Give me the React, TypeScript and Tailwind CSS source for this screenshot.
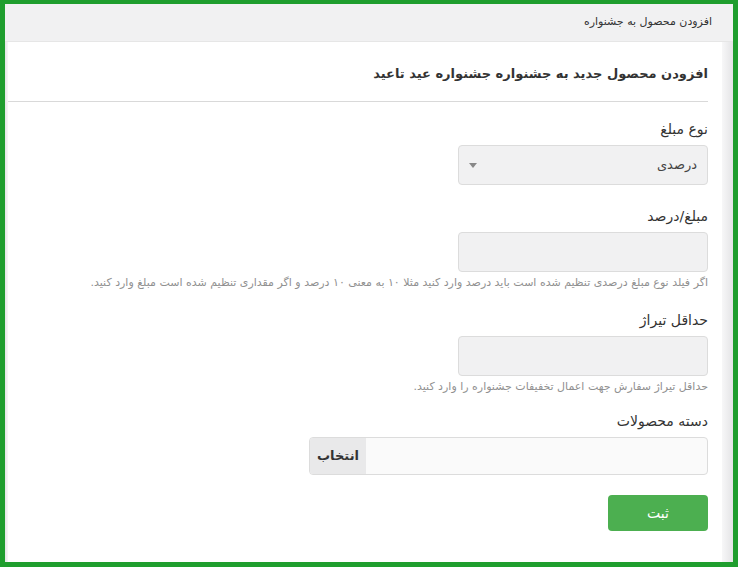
const Field = ({ label, children, help, className = "" }: { label: string; children: React.ReactNode; help?: string; className?: string }) => (
    <div className={`flex flex-col items-start ${className}`}>
        <label className="h-[20px] text-[14px] leading-[20px] text-[#333]">{label}</label>
        <div className="mt-[6px]">{children}</div>
        {help && (
            <p className="mt-[3px] h-[16px] whitespace-nowrap text-[11px] leading-[16px] text-[#909090]">{help}</p>
        )}
    </div>
);

export default function App() {
    return (
        <div
            dir="rtl"
            className="w-[738px] h-[567px] overflow-hidden border-[#1f9e2e] border-x-[5px] border-t-[4px] border-b-[5px] flex flex-col bg-white"
            style={{ fontFamily: '"DejaVu Sans", sans-serif' }}
        >
            <header className="h-[38px] shrink-0 bg-[#f1f1f2] flex items-center pr-[21px] border-b border-[#e6e6e6]">
                <span className="text-[11px] text-[#333]">افزودن محصول به جشنواره</span>
            </header>
            <div className="flex flex-1 min-h-0">
                <div className="w-[11px] shrink-0 bg-gradient-to-r from-[#f7f7f8] to-[#e4e4e6]" />
                <main className="flex-1 bg-white pr-[14px]">
                    <div className="h-[60px] flex items-center border-b border-[#d9d9d9]">
                        <h1 className="text-[13px] font-bold text-[#333] pt-[4px]">
                            افزودن محصول جدید به جشنواره جشنواره عید تاعید
                        </h1>
                    </div>
                    <div className="flex flex-col pt-[17px]">
                        <Field label="نوع مبلغ">
                            <div className="w-[250px] h-[40px] rounded-[4px] border border-[#dcdcdc] bg-[#f1f1f2] flex items-center justify-between px-[10px]">
                                <span className="text-[13px] text-[#444]">درصدی</span>
                                <span className="w-0 h-0 border-x-[4px] border-x-transparent border-t-[5px] border-t-[#888]" />
                            </div>
                        </Field>
                        <Field
                            className="mt-[21px]"
                            label="مبلغ/درصد"
                            help="اگر فیلد نوع مبلغ درصدی تنظیم شده است باید درصد وارد کنید مثلا ۱۰ به معنی ۱۰ درصد و اگر مقداری تنظیم شده است مبلغ وارد کنید."
                        >
                            <div className="w-[250px] h-[40px] rounded-[4px] border border-[#dcdcdc] bg-[#f1f1f2]" />
                        </Field>
                        <Field className="mt-[19px]" label="حداقل تیراژ" help="حداقل تیراژ سفارش جهت اعمال تخفیفات جشنواره را وارد کنید.">
                            <div className="w-[250px] h-[40px] rounded-[4px] border border-[#dcdcdc] bg-[#f1f1f2]" />
                        </Field>
                        <Field className="mt-[16px]" label="دسته محصولات">
                            <div className="w-[399px] h-[38px] rounded-[4px] border border-[#dcdcdc] bg-[#fafafa] flex justify-end overflow-hidden">
                                <div className="w-[56px] h-full bg-[#e9e9ea] flex items-center justify-center text-[13px] font-bold text-[#333]">
                                    انتخاب
                                </div>
                            </div>
                        </Field>
                    </div>
                    <div className="mt-[20px]">
                        <button className="w-[100px] h-[36px] rounded-[4px] bg-[#4caf50] text-white text-[14px]">ثبت</button>
                    </div>
                </main>
                <div className="w-[3px] shrink-0 bg-gradient-to-l from-[#f7f7f8] to-[#e4e4e6]" />
            </div>
        </div>
    );
}
